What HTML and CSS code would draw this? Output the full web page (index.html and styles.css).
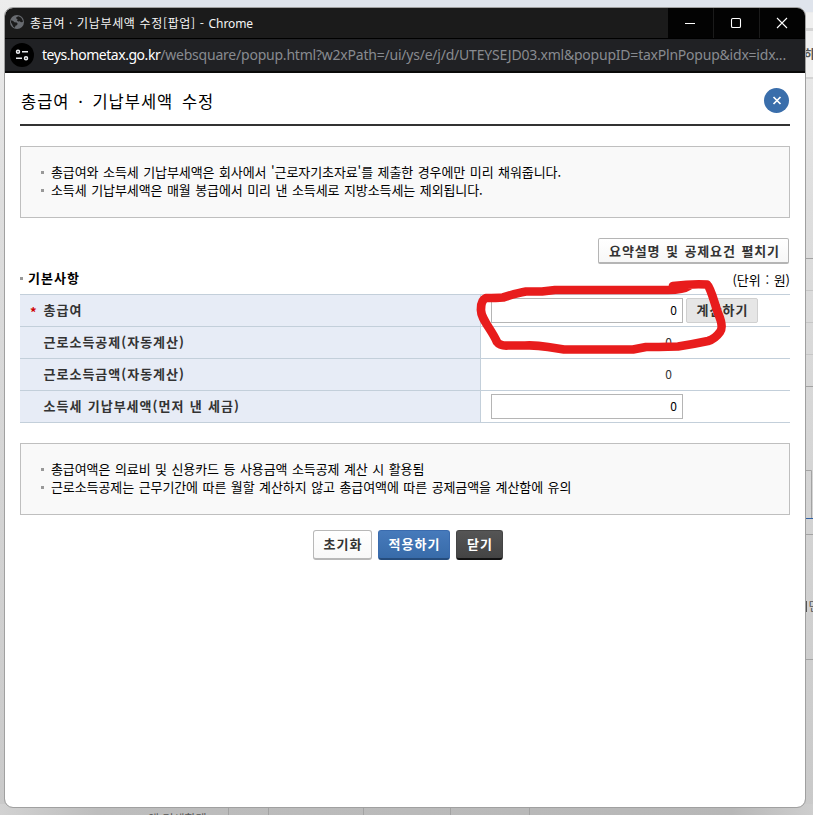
FILE: index.html
```html
<!DOCTYPE html>
<html lang="ko">
<head>
<meta charset="utf-8">
<title>총급여 · 기납부세액 수정[팝업]</title>
<link rel="stylesheet" href="styles.css">
</head>
<body>
<svg class="backdrop" width="813" height="815" aria-hidden="true">
  <defs>
    <linearGradient id="side" x1="0" y1="0" x2="0" y2="1"><stop offset="0" stop-color="#ededed"/><stop offset=".25" stop-color="#dedede"/><stop offset="1" stop-color="#c9c9c9"/></linearGradient>
    <linearGradient id="floor" x1="0" y1="0" x2="1" y2="0"><stop offset="0" stop-color="#d2d2d2"/><stop offset=".12" stop-color="#bdbdbd"/><stop offset=".9" stop-color="#b7b7b7"/><stop offset="1" stop-color="#cecece"/></linearGradient>
  </defs>
  <path fill="url(#side)" d="M0 0H813V815H0z"/>
  <path fill="#dfe4ec" d="M90 0H813V12H90z"/>
  <path fill="#f0f0f0" d="M800 13H813V77H800z"/>
  <path fill="#d4d4d4" d="M800 28H813V31H800zM800 77H813V79H800z"/>
  <path fill="url(#floor)" d="M0 804H813V815H0z"/>
  <path stroke="#a3a3a3" d="M228.5 808v7M268.5 808v7M363.5 808v7M450.5 808v7M529.5 808v7"/>
  <path stroke="#a3a3a3" fill="none" d="M805 258.5h8M805 386.5h8M805 470.5h6.5v48M805 534.5h8M805 659.5h8"/>
  <path stroke="#c6c6c6" d="M805 290.5h8M805 322.5h8M805 354.5h8"/>
  <path stroke="#2f60a4" d="M805 518.5h8"/>
  <path stroke="#555" d="M806.5 601v11"/>
  <text x="148" y="824" class="ghost">액 명세합계</text>
  <text x="804" y="59" class="ghost strong">하</text>
  <text x="808.5" y="611" class="ghost">민</text>
</svg>
<main class="window">
  <header class="titlebar">
    <svg class="globe" width="14" height="14" viewBox="0 0 14 14"><circle cx="7" cy="7" r="7" fill="#686b70"/><path fill="#1b1b1b" d="M1.2 5.2 3.2 6l1.2 1.2 2.3.3 1 1.3-.8 1.4-1.4.5-.6 2-1.8-1.2-1-2.2L.9 7.200zM6.300 2.200l2.200-.9 2.800 1.500 1.400 2.600.2 1.600-1.900.2-1.200-1-1.700.3-1.200-1.200.8-1-1.500-.8z"/></svg>
    <span class="caption">총급여 · 기납부세액 수정[팝업] - <span class="latin">Chrome</span></span>
    <div class="controls">
      <span><svg width="12" height="12"><path d="M1 6.500h10"/></svg></span>
      <span><svg width="12" height="12"><rect x="1.500" y="1.500" width="9" height="9" rx="1.300"/></svg></span>
      <span><svg width="12" height="12"><path d="m1 1 10 10M11 1 1 11"/></svg></span>
    </div>
  </header>
  <div class="addressbar">
    <svg class="site" width="24" height="24"><circle cx="12" cy="12" r="12" fill="#000"/><g fill="none" stroke="#e8eaed" stroke-width="1.500"><circle cx="8" cy="8.700" r="1.500"/><path d="M12 8.700h6M6 15.300h6"/><circle cx="16" cy="15.300" r="1.500"/></g></svg>
    <span class="url"><b>teys.hometax.go.kr</b>/websquare/popup.html?w2xPath=/ui/ys/e/j/d/UTEYSEJD03.xml&amp;popupID=taxPlnPopup&amp;idx=idx...</span>
  </div>
  <section class="page">
    <div class="heading">
      <h1>총급여 · 기납부세액 수정</h1>
      <button class="close" aria-label="닫기"><svg width="25" height="25"><path d="m9.500 9 7 7M16.500 9l-7 7"/></svg></button>
    </div>
    <ul class="notice">
      <li>총급여와 소득세 기납부세액은 회사에서 '근로자기초자료'를 제출한 경우에만 미리 채워줍니다.</li>
      <li>소득세 기납부세액은 매월 봉급에서 미리 낸 소득세로 지방소득세는 제외됩니다.</li>
    </ul>
    <div class="tools"><button class="expand">요약설명 및 공제요건 펼치기</button></div>
    <div class="subhead"><h2>기본사항</h2><span class="unit">(단위 : 원)</span></div>
    <div class="grid">
      <div class="row"><div class="label required">총급여</div><div class="value"><span class="field">0</span><button class="calc">계산하기</button></div></div>
      <div class="row"><div class="label">근로소득공제(자동계산)</div><div class="value"><span class="plain">0</span></div></div>
      <div class="row"><div class="label">근로소득금액(자동계산)</div><div class="value"><span class="plain">0</span></div></div>
      <div class="row"><div class="label">소득세 기납부세액(먼저 낸 세금)</div><div class="value"><span class="field">0</span></div></div>
    </div>
    <ul class="notice lower">
      <li>총급여액은 의료비 및 신용카드 등 사용금액 소득공제 계산 시 활용됨</li>
      <li>근로소득공제는 근무기간에 따른 월할 계산하지 않고 총급여액에 따른 공제금액을 계산함에 유의</li>
    </ul>
    <div class="actions">
      <button class="reset">초기화</button><button class="apply">적용하기</button><button class="dismiss">닫기</button>
    </div>
  </section>
</main>
<svg class="marker" width="813" height="815" aria-hidden="true">
  <path d="M673 286C681 285 699 284 707 284.500C711 288 714 302 718 313Q724 327 720 332Q715 339 708 341Q694 344 678 346.500Q656 347 646 347L633 349.500H564L548 347Q536 345 525 345.500H508Q500 346 497 342C492 330 480 318 481 309Q481 300 486 298Q497 298 503 297.500Q517 293 526 291.500H542L555 290H668Q683 290 689 286"/>
</svg>
</body>
</html>
```
FILE: styles.css
```css
* { box-sizing: border-box; }
body {
  margin: 0;
  width: 813px;
  height: 815px;
  overflow: hidden;
  position: relative;
  padding: 8px 0 0 5px;
  font-family: "Noto Sans CJK KR", sans-serif;
  font-size: 13px;
  color: #000;
}
button { font-family: inherit; padding: 0; margin: 0; white-space: nowrap; }
.backdrop, .marker { position: absolute; left: 0; top: 0; }
.ghost { font-size: 12px; fill: #555; }
.strong { font-weight: 700; }
.marker { pointer-events: none; }
.marker path { fill: none; stroke: #e81c1c; stroke-width: 8.7; stroke-linecap: round; stroke-linejoin: round; }

.window {
  position: relative;
  width: 800px;
  height: 799px;
  border-radius: 8px;
  background: #fff;
  overflow: hidden;
  outline: 1px solid #a0a0a0;
}
.titlebar { display: flex; align-items: center; height: 31px; background: #1b1b1b; border-bottom: 1px solid #000; padding-left: 5px; }
.globe { margin-top: -2px; }
.caption { margin-left: 6px; color: #f5f5f5; font-size: 12px; letter-spacing: 0.65px; line-height: 30px; white-space: nowrap; }
.latin { letter-spacing: -0.1px; font-family: "Noto Sans", sans-serif; }
.controls { display: flex; margin-left: auto; height: 30px; gap: 1px; background: #1b1b1b; }
.controls span { width: 45px; background: #030303; display: flex; align-items: center; justify-content: center; padding-right: 1px; }
.controls svg { fill: none; stroke: #fff; stroke-width: 1.1; }
.addressbar { display: flex; align-items: center; height: 34px; background: #202124; border-bottom: 2px solid #090909; padding-left: 5px; }
.site { flex: none; }
.url { margin-left: 8px; font-family: "Noto Sans", sans-serif; font-size: 14px; letter-spacing: -0.22px; color: #888b90; line-height: 30px; white-space: nowrap; }
.url b { font-weight: 400; color: #fff; letter-spacing: -0.46px; }

.page { padding: 0 15px; }
.heading { display: flex; justify-content: space-between; align-items: center; height: 53px; border-bottom: 2px solid #333; padding-top: 4px; }
h1 { margin: 1px 0 0 1px; font-size: 16.5px; font-weight: 400; line-height: 24px; letter-spacing: 1px; word-spacing: 3px; white-space: nowrap; }
.close { width: 25px; height: 25px; margin-right: 1px; border: 0; border-radius: 50%; background: #3a6eab; }
.close svg { display: block; stroke: #fff; stroke-width: 1.7; fill: none; }

.notice { margin: 20px 0 0; padding: 16px 0 0 20px; height: 72px; list-style: none; border: 1px solid #bfbfbf; background: #f9f9f9; }
.notice li { display: flex; align-items: center; height: 18px; line-height: 18px; white-space: nowrap; letter-spacing: -0.09px; word-spacing: 1px; }
.notice li::before { content: ""; width: 3px; height: 3px; background: #999; margin-right: 7px; }
.tools { display: flex; justify-content: flex-end; padding: 20px 1px 0 0; }
.expand { width: 191px; height: 26px; border: 1px solid #b5b5b5; border-bottom-width: 2px; border-radius: 2px; background: linear-gradient(#fff, #f7f7f7); color: #333; font-size: 13px; font-weight: 700; line-height: 21px; letter-spacing: 0.9px; word-spacing: 1px; padding: 0 0 1px 2px; }
.subhead { display: flex; align-items: center; height: 30px; }
h2 { display: flex; align-items: center; margin: -2px 0 0; font-size: 13px; line-height: 18px; letter-spacing: 1px; }
h2::before { content: ""; width: 3px; height: 3px; margin-right: 5px; background: #999; }
.unit { margin: 1px 0 0 auto; word-spacing: 1px; }
.grid { border-top: 1px solid #c3cfda; }
.row { display: grid; grid-template-columns: 461px 1fr; height: 32px; border-bottom: 1px solid #c3cfda; }
.label { position: relative; padding-left: 23.5px; background: #e7ecf6; border-right: 1px solid #c3cfda; color: #333; font-weight: 700; line-height: 30px; letter-spacing: 1px; word-spacing: 0.7px; white-space: nowrap; }
.required::before { content: "*"; position: absolute; left: 10px; top: 2px; color: #d00000; }
.value { display: flex; align-items: center; padding-left: 10px; }
.field { width: 192px; height: 25px; border: 1px solid #b5b5b5; background: #fff; text-align: right; padding-right: 5px; font-size: 12px; line-height: 21px; }
.plain { width: 181px; text-align: right; color: #333; font-size: 12px; line-height: 18px; margin-top: -2px; }
.calc { width: 72px; height: 25px; margin-left: 3px; border: 1px solid #d0d0d0; border-radius: 2px; background: #e6e6e6; color: #333; font-size: 13px; font-weight: 700; line-height: 20px; letter-spacing: 1px; padding: 0 0 2px 1px; }
.lower { margin-top: 20px; }
.actions { display: flex; justify-content: center; gap: 6px; margin: 15px 0 0 6px; }
.actions button { height: 30px; border-radius: 3px; font-size: 13px; font-weight: 700; line-height: 25px; letter-spacing: 1px; padding: 0 0 2px 1px; }
.reset { width: 59px; border: 1px solid #b8b8b8; border-bottom-width: 2px; background: linear-gradient(#fff, #f8f8f8); color: #333; }
.apply { width: 72px; border: 1px solid #3a6bae; border-bottom: 2px solid #254c7c; background: linear-gradient(#467abb, #386ba9); color: #fff; }
.dismiss { width: 47px; border: 1px solid #444; border-bottom: 2px solid #111; background: linear-gradient(#555, #444); color: #fff; }
```
